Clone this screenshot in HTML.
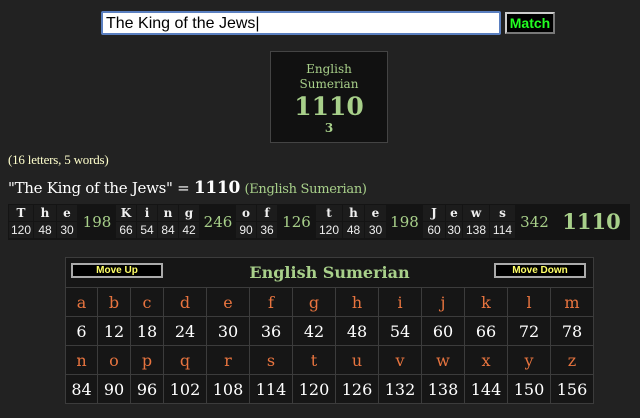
<!DOCTYPE html>
<html><head><meta charset="utf-8"><style>
*{margin:0;padding:0;box-sizing:border-box}
body{width:640px;height:418px;background:#222;position:relative;overflow:hidden;font-family:"DejaVu Serif","Liberation Serif",serif;color:#fff}
.a{position:absolute}
.inp{left:101px;top:11px;width:400px;height:24px;background:#fff;border:2px solid #5a7fc0;border-radius:2px;font-family:"Liberation Sans",sans-serif;font-size:16px;color:#000;padding:1px 3px;line-height:19px}
.btn{left:505px;top:12px;width:50px;height:22px;background:#000;border:2px outset #ccc;color:#2f2;font-family:"Liberation Sans",sans-serif;font-weight:bold;font-size:14px;text-align:center;line-height:18px}
.box{left:270px;top:51px;width:118px;height:92px;background:#111;border:1px solid #444;text-align:center;color:#a8d08a}
.bd{left:8px;top:204px;width:622px;height:36px;background:#141414}
.c{position:absolute;background:#1c1c1c;text-align:center;font-size:11px;line-height:16px}
.l{top:1px;height:16px;font-weight:bold;color:#f0f0f0;font-size:12px}
.n{top:18px;height:16px;color:#eee;font-family:"Liberation Sans",sans-serif;font-size:12px}
.s{position:absolute;top:0;height:36px;line-height:36px;text-align:center;color:#a8d08a;font-size:15px}
table{border-collapse:collapse}
.t{left:65px;top:257px;width:529px;border:1px solid #444;background:#161616}
.t td{border:1px solid #3c3c3c;text-align:center;height:29px;font-size:16px;padding:0}
.t .lt{color:#e8743f}
.t .nm{color:#fff;font-size:15px}
.mb{position:absolute;top:5px;width:92px;height:15px;background:#000;border:2px solid #aaa;color:#ff6;font-family:"Liberation Sans",sans-serif;font-weight:bold;font-size:10px;line-height:11px;text-align:center}
</style></head><body>
<div class="a inp">The King of the Jews|</div>
<div class="a btn">Match</div>
<div class="a box"><div style="font-size:12px;line-height:15px;margin-top:10px">English<br>Sumerian</div><div style="font-size:25px;font-weight:bold;line-height:30px">1110</div><div style="font-size:12px;font-weight:bold;line-height:12px">3</div></div>
<div class="a" style="left:8px;top:152px;font-size:13px;color:#ffffcc;font-family:'Liberation Serif',serif;letter-spacing:-0.2px">(16 letters, 5 words)</div>
<div class="a" style="left:8px;top:178px;font-size:15px;white-space:nowrap;letter-spacing:-0.3px">"The King of the Jews" = <b style="font-size:17px">1110</b> <span style="color:#a8d08a;font-size:13px">(English Sumerian)</span></div>
<div class="a bd">
<div class="c l" style="left:1px;width:24px">T</div><div class="c n" style="left:1px;width:24px">120</div>
<div class="c l" style="left:26px;width:22px">h</div><div class="c n" style="left:26px;width:22px">48</div>
<div class="c l" style="left:49px;width:20px">e</div><div class="c n" style="left:49px;width:20px">30</div>
<div class="s" style="left:70px;width:38px">198</div>
<div class="c l" style="left:108px;width:20px">K</div><div class="c n" style="left:108px;width:20px">66</div>
<div class="c l" style="left:129px;width:20px">i</div><div class="c n" style="left:129px;width:20px">54</div>
<div class="c l" style="left:150px;width:20px">n</div><div class="c n" style="left:150px;width:20px">84</div>
<div class="c l" style="left:171px;width:20px">g</div><div class="c n" style="left:171px;width:20px">42</div>
<div class="s" style="left:192px;width:36px">246</div>
<div class="c l" style="left:228px;width:20px">o</div><div class="c n" style="left:228px;width:20px">90</div>
<div class="c l" style="left:249px;width:20px">f</div><div class="c n" style="left:249px;width:20px">36</div>
<div class="s" style="left:270px;width:37px">126</div>
<div class="c l" style="left:308px;width:26px">t</div><div class="c n" style="left:308px;width:26px">120</div>
<div class="c l" style="left:335px;width:21px">h</div><div class="c n" style="left:335px;width:21px">48</div>
<div class="c l" style="left:357px;width:21px">e</div><div class="c n" style="left:357px;width:21px">30</div>
<div class="s" style="left:378px;width:37px">198</div>
<div class="c l" style="left:415px;width:22px">J</div><div class="c n" style="left:415px;width:22px">60</div>
<div class="c l" style="left:438px;width:16px">e</div><div class="c n" style="left:438px;width:16px">30</div>
<div class="c l" style="left:455px;width:26px">w</div><div class="c n" style="left:455px;width:26px">138</div>
<div class="c l" style="left:482px;width:25px">s</div><div class="c n" style="left:482px;width:25px">114</div>
<div class="s" style="left:508px;width:37px">342</div>
<div class="s" style="left:545px;width:77px;font-size:21px;font-weight:bold">1110</div>
</div>
<table class="a t">
<tr><td colspan="13" style="height:30px;position:relative"><div class="mb" style="left:5px">Move Up</div><span style="color:#a8d08a;font-weight:bold;font-size:16px">English Sumerian</span><div class="mb" style="right:7px">Move Down</div></td></tr>
<tr class="lt"><td style="width:32px">a</td><td style="width:33px">b</td><td style="width:33px">c</td><td>d</td><td>e</td><td>f</td><td>g</td><td>h</td><td>i</td><td>j</td><td>k</td><td>l</td><td>m</td></tr>
<tr class="nm"><td>6</td><td>12</td><td>18</td><td>24</td><td>30</td><td>36</td><td>42</td><td>48</td><td>54</td><td>60</td><td>66</td><td>72</td><td>78</td></tr>
<tr class="lt"><td>n</td><td>o</td><td>p</td><td>q</td><td>r</td><td>s</td><td>t</td><td>u</td><td>v</td><td>w</td><td>x</td><td>y</td><td>z</td></tr>
<tr class="nm"><td>84</td><td>90</td><td>96</td><td>102</td><td>108</td><td>114</td><td>120</td><td>126</td><td>132</td><td>138</td><td>144</td><td>150</td><td>156</td></tr>
</table>
</body></html>
